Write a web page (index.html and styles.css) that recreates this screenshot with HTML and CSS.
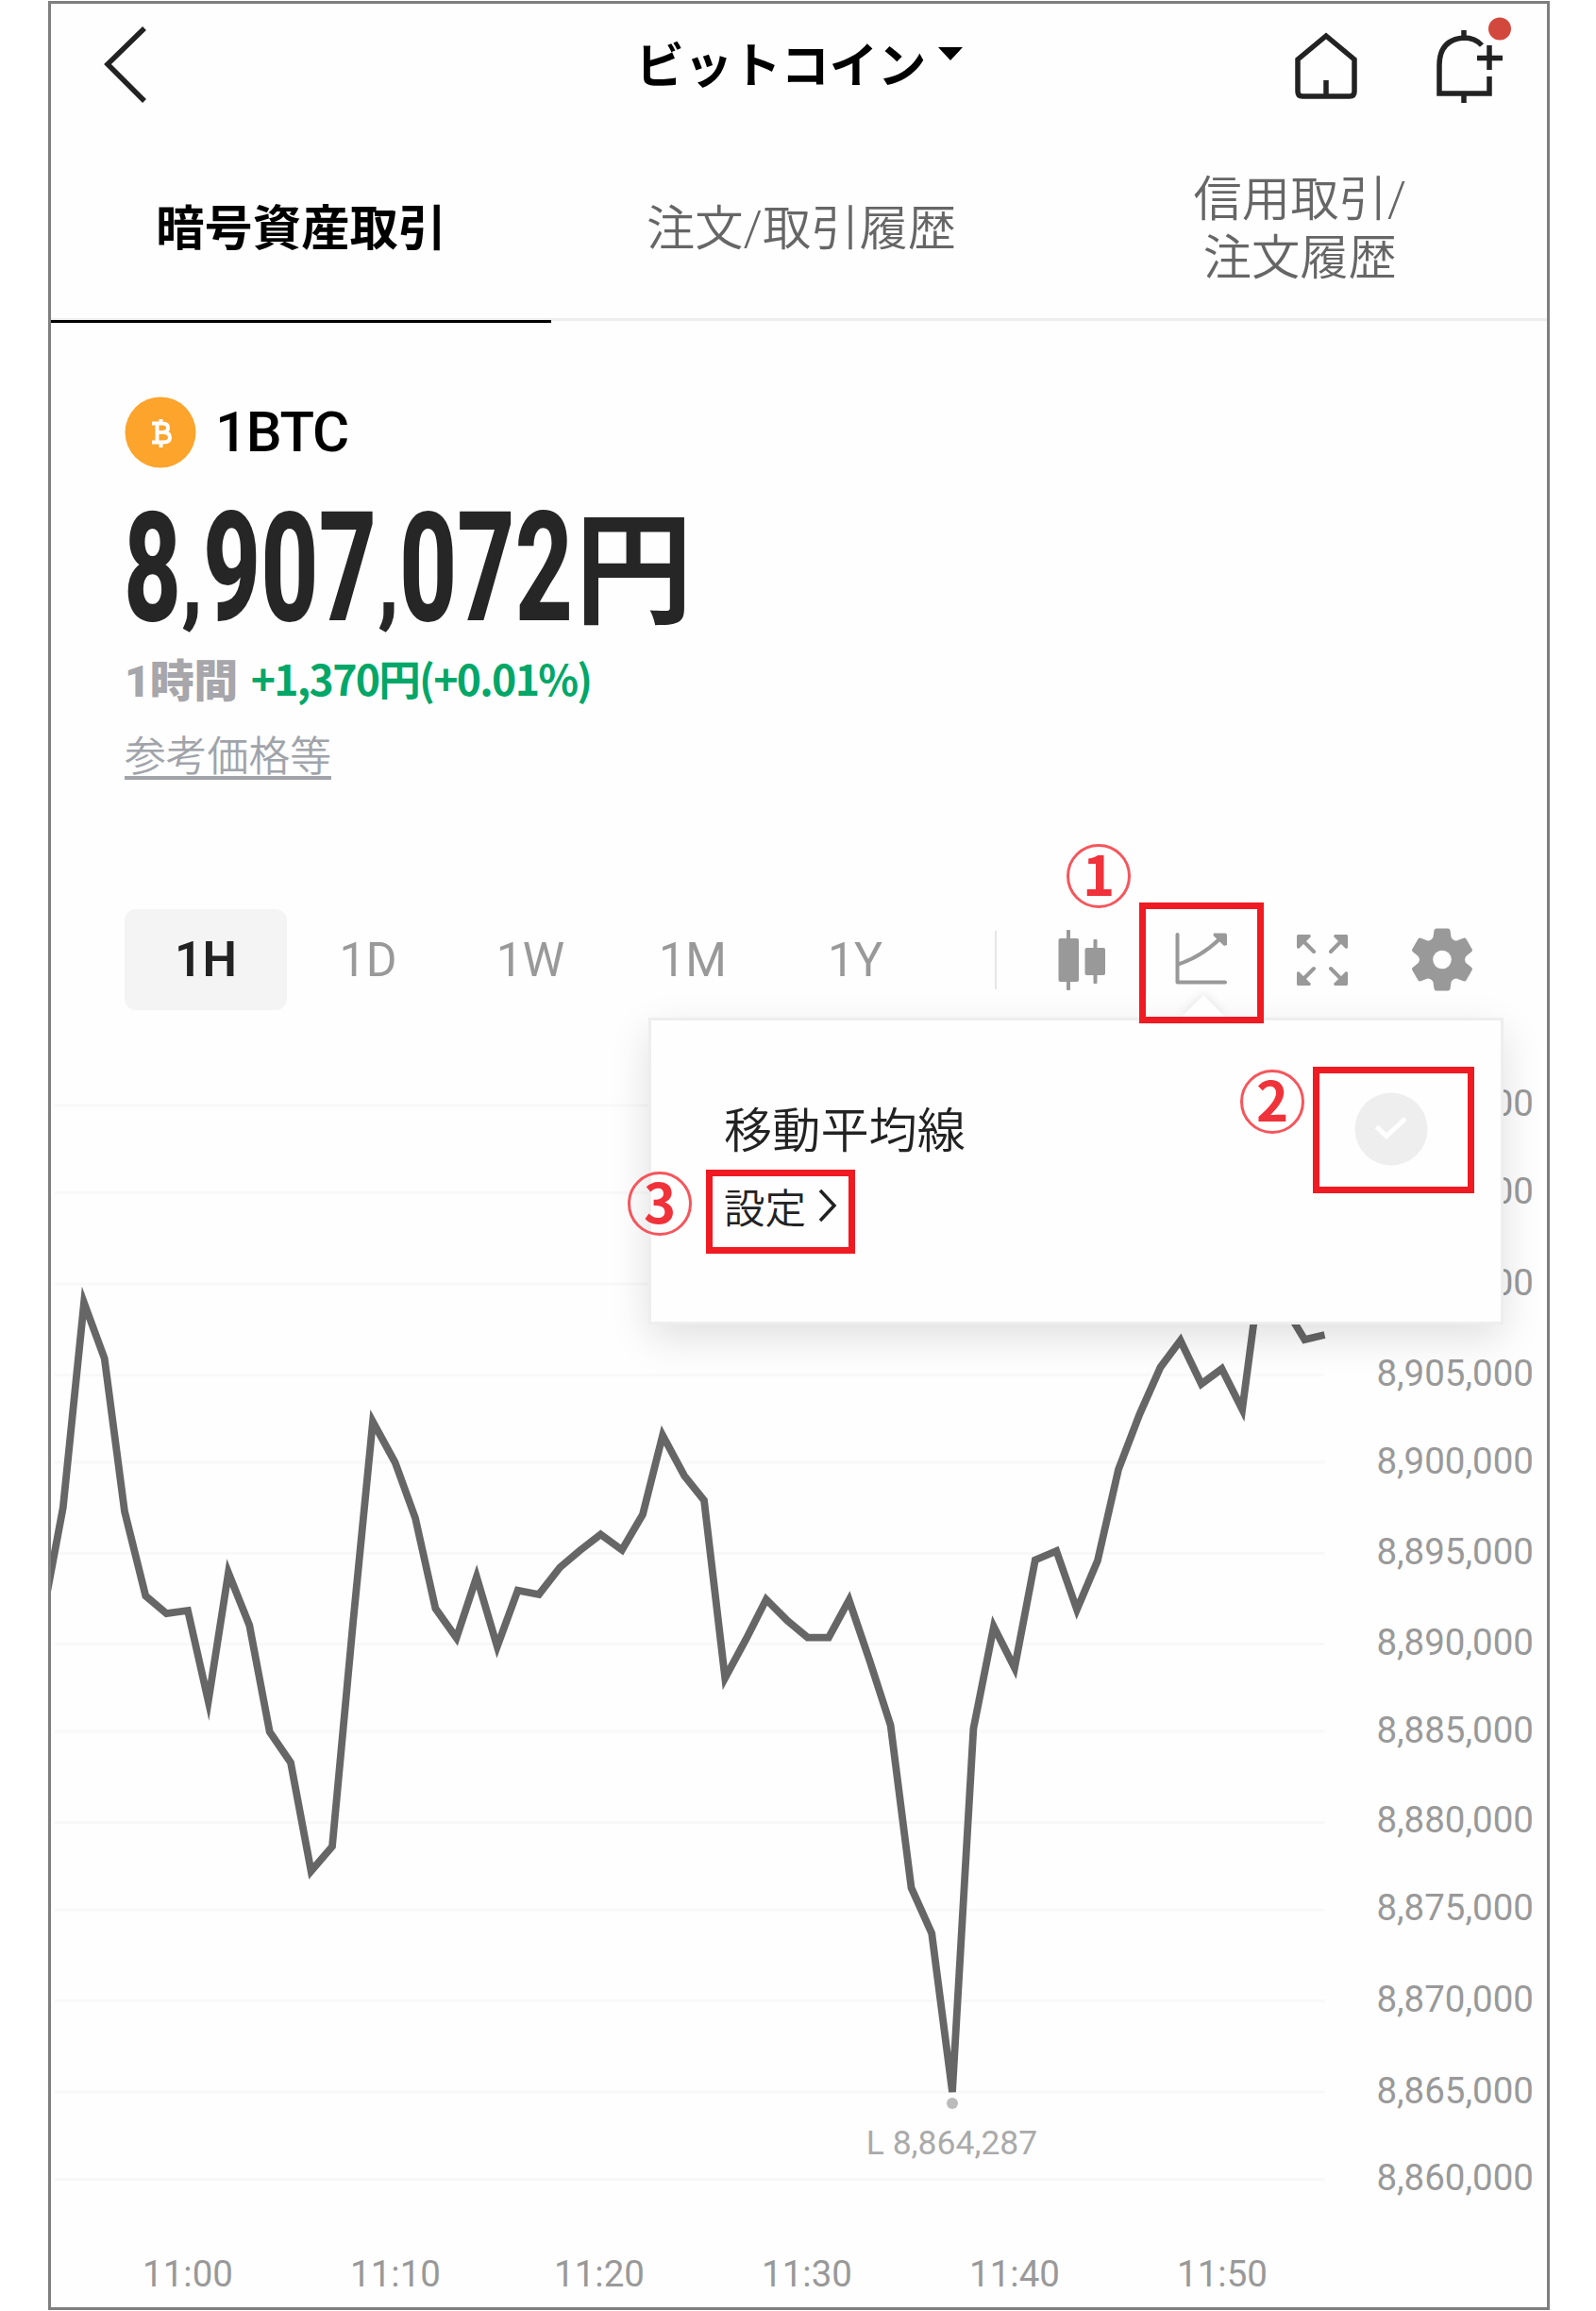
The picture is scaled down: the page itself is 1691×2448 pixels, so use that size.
FILE: index.html
```html
<!DOCTYPE html>
<html lang="ja">
<head>
    <meta charset="UTF-8">
    <meta name="viewport" content="width=device-width, initial-scale=1.0">
    <title>ビットコイン - 暗号資産取引</title>
    <link rel="stylesheet" href="styles.css">
</head>
<body>
    <div class="phone">
        <!-- ヘッダー -->
        <header class="header">
            <svg class="back" width="48" height="84" viewBox="0 0 48 84"><path d="M45 4 L6 42 L45 81"/></svg>
            <div class="title">ビットコイン<svg class="caret" width="26" height="14" viewBox="0 0 26 14"><path d="M0 0H26L13 14z"/></svg></div>
            <div class="header-icons">
                <svg width="68" height="80" viewBox="0 0 68 80">
                    <path d="M34 9 L4 34 V68 Q4 73 9 73 H59 Q64 73 64 68 V34 Z M34 56 V73"/>
                </svg>
                <svg width="84" height="96" viewBox="0 0 84 96">
                    <path d="M50 32 Q43 24 31 24 Q5 26 5 53 V83 H58 V65 M31 16 V24 M31 83 V93 M58 32 V58 M45 45.5 H72"/>
                    <circle class="dot" cx="69" cy="14.500" r="12"/>
                </svg>
            </div>
        </header>

        <!-- タブ -->
        <nav class="tabs">
            <div class="tab active">暗号資産取引</div>
            <div class="tab">注文/取引履歴</div>
            <div class="tab">信用取引/<br>注文履歴</div>
        </nav>

        <!-- 価格 -->
        <section class="summary">
            <div class="coin">
                <svg width="76" height="76" viewBox="0 0 76 76">
                    <circle cx="38" cy="38" r="37.500" fill="#fca42c"/>
                    <path class="coin-mark" d="M29 28.500 H40 Q46 28.500 46 33 Q46 38 40 38 H34 H41 Q48 38 48 43.500 Q48 48.500 41 48.500 H29 M34.500 28.500 V48.500 M38.500 24 V28 M38.500 49 V54"/>
                </svg>
                <span>1BTC</span>
            </div>
            <svg class="price" width="620" height="140" viewBox="0 0 620 140">
                <text class="price-num" y="127"><tspan x="-1" textLength="61" lengthAdjust="spacingAndGlyphs">8</tspan><tspan class="comma" x="60" y="121" textLength="23" lengthAdjust="spacingAndGlyphs">,</tspan><tspan x="83" y="127" textLength="184" lengthAdjust="spacingAndGlyphs">907</tspan><tspan class="comma" x="268" y="121" textLength="23" lengthAdjust="spacingAndGlyphs">,</tspan><tspan x="291" y="127" textLength="184" lengthAdjust="spacingAndGlyphs">072</tspan></text>
                <text class="price-yen" x="477" y="120" textLength="125" lengthAdjust="spacingAndGlyphs">円</text>
            </svg>
            <div class="change"><span class="term">1時間</span><span class="diff">+1,370円(+0.01%)</span></div>
            <a class="ref-link">参考価格等</a>
        </section>

        <!-- 期間とツール -->
        <div class="toolbar">
            <div class="period selected">1H</div>
            <div class="period">1D</div>
            <div class="period">1W</div>
            <div class="period">1M</div>
            <div class="period">1Y</div>
            <div class="divider"></div>
            <svg class="tool candle" width="50" height="67" viewBox="0 0 50 67">
                <rect x="0.500" y="11" width="21.500" height="46" rx="2"/>
                <rect x="9" y="2" width="4" height="64" rx="1"/>
                <rect x="28.500" y="21" width="21.500" height="29" rx="2"/>
                <rect x="37.500" y="12" width="4" height="47" rx="1"/>
            </svg>
            <svg class="tool trend" width="56" height="67" viewBox="0 0 56 67">
                <path class="line" d="M2.500 7 V57.500 H53 M3 38.500 Q27 31 48 11"/>
                <path d="M41 5.500 H53 Q55 5.500 55 7.500 V18 L52 19 L40.500 8z"/>
            </svg>
            <svg class="tool expand" width="56" height="68" viewBox="0 0 56 68">
                <path class="line" d="M7 13 L19 25 M49 13 L37 25 M7 55 L19 43 M49 55 L37 43"/>
                <path d="M2 7H15L16 9L3 22L1 21V8z M54 7H41L40 9L53 22L55 21V8z M2 61H15L16 59L3 46L1 47V60z M54 61H41L40 59L53 46L55 47V60z"/>
            </svg>
            <svg class="tool gear" width="66" height="67" viewBox="-33 -33.500 66 67">
                <circle r="24"/>
                <path id="tooth" d="M-6 -33H6Q8 -33 8.500 -31L9.500 -24Q10 -22 14 -19H-14Q-10 -22 -9.500 -24L-8.500 -31Q-8 -33 -6 -33z"/>
                <use href="#tooth" transform="rotate(60)"/>
                <use href="#tooth" transform="rotate(120)"/>
                <use href="#tooth" transform="rotate(180)"/>
                <use href="#tooth" transform="rotate(240)"/>
                <use href="#tooth" transform="rotate(300)"/>
                <circle class="hole" r="9.800"/>
            </svg>
        </div>

        <!-- チャート -->
        <svg class="chart" width="1585" height="1344" viewBox="54 1100 1585 1344">
            <path class="grid" d="M58 1171H1403.500M58 1263.500H1403.500M58 1360H1403.500M58 1456.500H1403.500M58 1549H1403.500M58 1645.500H1403.500M58 1741.500H1403.500M58 1834H1403.500M58 1930.500H1403.500M58 2023H1403.500M58 2119.500H1403.500M58 2216H1403.500M58 2308.500H1403.500"/>
            <polyline class="price-line" points="45,1713 66.800,1597 89,1380 110.700,1439 132,1601 154.300,1690.500 176.400,1709.200 199,1706 220.700,1802 242,1666 264.300,1721.700 285.700,1834.500 308,1867 329.600,1982 352,1956 374,1719.500 395,1506 418.600,1549 440,1608 461.400,1703.800 483.600,1735 505,1670.400 526.800,1744 548.600,1684.600 571,1689 593.200,1660.400 614.300,1642.500 636.400,1625.400 659,1641.800 681,1604.300 702.100,1520.400 725,1563.200 746,1589.300 768.200,1777.500 790.400,1736.400 811.800,1694.300 834.300,1716.800 855.700,1734.600 878,1734.600 899.600,1695 921.400,1759 943.600,1827.500 965.500,1999.600 987.200,2047.900 1009,2216 1031.400,1831 1052.900,1723 1075,1766.800 1096.800,1652.500 1119.300,1643 1141,1705 1162.900,1653.300 1185,1556.700 1207.300,1498.300 1229.500,1448.300 1250.700,1420 1272.900,1466 1294.500,1450 1316.200,1493 1338.500,1325 1360,1382 1382.300,1419 1403.500,1414"/>
            <circle cx="1009" cy="2228" r="6" fill="#bbb"/>
            <text class="low" x="1008.500" y="2282">L 8,864,287</text>
            <g class="y-labels">
                <text x="1625" y="1182">8,920,000</text>
                <text x="1625" y="1275">8,915,000</text>
                <text x="1625" y="1372">8,910,000</text>
                <text x="1625" y="1468">8,905,000</text>
                <text x="1625" y="1560.500">8,900,000</text>
                <text x="1625" y="1656.500">8,895,000</text>
                <text x="1625" y="1753">8,890,000</text>
                <text x="1625" y="1845.500">8,885,000</text>
                <text x="1625" y="1941">8,880,000</text>
                <text x="1625" y="2033.500">8,875,000</text>
                <text x="1625" y="2130.500">8,870,000</text>
                <text x="1625" y="2227.500">8,865,000</text>
                <text x="1625" y="2320">8,860,000</text>
            </g>
            <g class="x-labels">
                <text x="199" y="2422">11:00</text>
                <text x="419" y="2422">11:10</text>
                <text x="635" y="2422">11:20</text>
                <text x="855" y="2422">11:30</text>
                <text x="1075" y="2422">11:40</text>
                <text x="1295" y="2422">11:50</text>
            </g>
        </svg>

        <!-- 移動平均線のポップアップ -->
        <div class="popup">
            <div class="popup-row">
                <span class="popup-title">移動平均線</span>
                <svg width="78" height="78" viewBox="0 0 78 78">
                    <circle cx="39" cy="39" r="38.500" fill="#eee"/>
                    <path class="check" d="M23.500 36.500 L34 46.500 L54 28"/>
                </svg>
            </div>
            <div class="popup-setting">設定<svg width="20" height="36" viewBox="0 0 20 36"><path d="M2 2 L17 18 L2 34"/></svg></div>
        </div>
        <div class="arrow"></div>

        <!-- 説明用の番号と枠 -->
        <div class="mark box1"></div>
        <div class="mark box2"></div>
        <div class="mark box3"></div>
        <div class="num num1">1</div>
        <div class="num num2">2</div>
        <div class="num num3">3</div>
    </div>
</body>
</html>
```
FILE: styles.css
```css
/* 基本様式 */
* {
    box-sizing: border-box;
}

body {
    margin: 0;
    background-color: #fff;
    font-family: Roboto, 'Noto Sans CJK JP', sans-serif;
    color: #222;
}

svg {
    display: block;
    flex: none;
}

.phone {
    position: relative;
    width: 1591px;
    height: 2446px;
    margin: 1px 0 0 51px;
    border: 3px solid #7f7f7f;
    background-color: #fefefe;
    overflow: hidden;
}

/* ヘッダー */
.header {
    display: grid;
    grid-template-columns: 1fr auto 1fr;
    height: 136px;
    padding: 0 35px 0 54px;
}

.header path {
    fill: none;
    stroke: #222;
    stroke-width: 5.5;
}

.back {
    margin-top: 22px;
}

.title {
    display: flex;
    margin-top: 30px;
    padding-right: 18px;
    font-size: 51.3px;
    line-height: 74px;
    font-weight: 700;
    color: #000;
}

.header .caret {
    margin: 16px 0 0 13px;
}

.header .caret path {
    fill: #000;
    stroke: none;
}

.header-icons {
    display: flex;
    justify-content: flex-end;
    gap: 81px;
    padding-top: 12px;
}

.header-icons svg:first-child {
    margin-top: 13px;
}

.dot {
    fill: #d3483c;
}

/* タブ */
.tabs {
    display: grid;
    grid-template-columns: repeat(3, 1fr);
    height: 200px;
    border-bottom: 3px solid #eee;
}

.tab {
    position: relative;
    display: flex;
    align-items: center;
    justify-content: center;
    padding: 8px 0 0 5px;
    font-size: 51.3px;
    line-height: 62px;
    font-weight: 350;
    text-align: center;
    color: #666;
}

.tab.active {
    padding-left: 2px;
    font-weight: 700;
    color: #000;
}

.tab.active::after {
    content: '';
    position: absolute;
    left: 0;
    right: -2px;
    bottom: -5px;
    height: 3px;
    background-color: #000;
}

/* 価格 */
.summary {
    height: 623px;
    padding: 80px 0 0 78px;
}

.coin {
    display: flex;
    align-items: center;
    gap: 20px;
    height: 76px;
    font-size: 60px;
    font-weight: 500;
    letter-spacing: -1.3px;
    color: #000;
}

.coin span {
    margin-top: -2px;
}

.coin-mark {
    fill: none;
    stroke: #fff;
    stroke-width: 4;
}

.price {
    margin-top: 34px;
    fill: #262626;
    overflow: visible;
}

.price-num {
    font-size: 161px;
    font-weight: 800;
}

.comma {
    font-size: 104px;
}

.price-yen {
    font-family: 'Noto Sans CJK JP', sans-serif;
    font-size: 130px;
    font-weight: 700;
}

.change {
    display: flex;
    align-items: center;
    gap: 14px;
    height: 60px;
    margin-top: 17px;
    font-size: 47px;
    font-weight: 700;
}

.term {
    font-weight: 900;
    letter-spacing: -0.5px;
    color: #a6a6ab;
}

.diff {
    font-family: 'Noto Sans CJK JP', sans-serif;
    font-size: 44.5px;
    font-weight: 700;
    letter-spacing: -1.7px;
    color: #00a768;
}

.ref-link {
    display: inline-block;
    margin-top: 35px;
    border-bottom: 4px solid #a0a4aa;
    font-size: 43.8px;
    line-height: 40px;
    font-weight: 350;
    color: #a0a4aa;
}

/* 期間とツール */
.toolbar {
    display: flex;
    align-items: center;
    height: 107px;
    padding-left: 78px;
}

.period {
    width: 172px;
    height: 107px;
    border-radius: 12px;
    font-size: 50px;
    line-height: 109px;
    text-align: center;
    color: #999;
}

.period.selected {
    background-color: #f4f4f4;
    font-size: 51.5px;
    line-height: 107px;
    font-weight: 600;
    color: #222;
}

.divider {
    width: 2px;
    height: 62px;
    margin-left: 62px;
    background-color: #e6e6e6;
}

.tool {
    fill: #999;
}

.tool .line {
    fill: none;
    stroke: #999;
    stroke-width: 4;
    stroke-linecap: round;
    stroke-linejoin: round;
}

.candle {
    margin-left: 65px;
}

.trend {
    margin-left: 74px;
}

.expand {
    margin-left: 72px;
}

.gear {
    margin-left: 66px;
}

.gear .hole {
    fill: #fefefe;
}

/* チャート */
.chart {
    margin-top: 30px;
}

.grid {
    fill: none;
    stroke: #f8f8f8;
    stroke-width: 3;
}

.price-line {
    fill: none;
    stroke: #666;
    stroke-width: 7.8;
    stroke-miterlimit: 10;
}

.y-labels,
.x-labels {
    font-size: 38.5px;
    fill: #999;
    text-anchor: end;
}

.x-labels {
    text-anchor: middle;
}

.low {
    font-size: 35.5px;
    fill: #aaa;
    text-anchor: middle;
}

/* ポップアップ */
.popup {
    position: absolute;
    top: 1074px;
    left: 633px;
    width: 906px;
    height: 325px;
    padding: 76px 77px 0 77px;
    border: 3px solid #eee;
    background-color: #fefefe;
    box-shadow: 0 14px 40px rgba(0, 0, 0, 0.12);
}

.popup-row {
    display: flex;
    align-items: center;
    justify-content: space-between;
    height: 78px;
}

.popup-title {
    margin-top: -4px;
    font-size: 51.2px;
    font-weight: 350;
}

.popup-setting {
    display: flex;
    align-items: center;
    gap: 13px;
    height: 60px;
    margin-top: 12px;
    font-size: 43.5px;
    font-weight: 350;
}

.popup-setting path {
    fill: none;
    stroke: #222;
    stroke-width: 3.5;
}

.check {
    fill: none;
    stroke: #fff;
    stroke-width: 5;
}

.arrow {
    position: absolute;
    top: 1050px;
    left: 1197px;
    border: 24px solid transparent;
    border-top: 0;
    border-bottom-color: #fefefe;
    filter: drop-shadow(0 -3px 5px rgba(0, 0, 0, 0.08));
}

/* 番号と枠 */
.mark {
    position: absolute;
    border: 7px solid #ef1a22;
}

.box1 {
    top: 952px;
    left: 1153px;
    width: 132px;
    height: 128px;
}

.box2 {
    top: 1126px;
    left: 1337px;
    width: 171px;
    height: 134px;
}

.box3 {
    top: 1235px;
    left: 694px;
    width: 158px;
    height: 89px;
}

.num {
    position: absolute;
    width: 68px;
    height: 68px;
    border: 3px solid #f6555c;
    border-radius: 50%;
    font-family: 'Noto Sans CJK JP', sans-serif;
    font-size: 58px;
    line-height: 54px;
    font-weight: 700;
    text-align: center;
    color: #f0323a;
}

.num1 {
    top: 890px;
    left: 1076px;
}

.num2 {
    top: 1129px;
    left: 1260px;
}

.num3 {
    top: 1237px;
    left: 611px;
}
```
